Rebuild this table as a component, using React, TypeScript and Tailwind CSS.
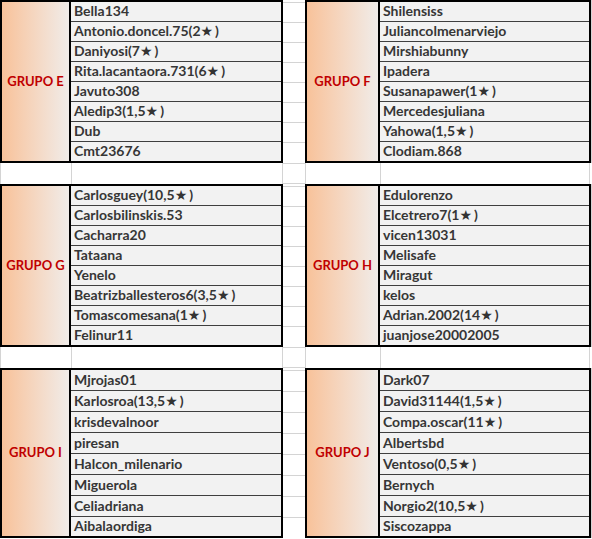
import React from "react";

type Group = { label: string; names: string[] };

const bands: { left: Group; right: Group; rows: string[] }[] = [
  {
    rows: ["h-[20px]", "h-[20px]", "h-[20px]", "h-[20px]", "h-[20px]", "h-[20px]", "h-[20px]", "h-[19px]"],
    left: {
      label: "GRUPO E",
      names: ["Bella134", "Antonio.doncel.75(2★)", "Daniyosi(7★)", "Rita.lacantaora.731(6★)", "Javuto308", "Aledip3(1,5★)", "Dub", "Cmt23676"],
    },
    right: {
      label: "GRUPO F",
      names: ["Shilensiss", "Juliancolmenarviejo", "Mirshiabunny", "Ipadera", "Susanapawer(1★)", "Mercedesjuliana", "Yahowa(1,5★)", "Clodiam.868"],
    },
  },
  {
    rows: ["h-[20px]", "h-[20px]", "h-[20px]", "h-[20px]", "h-[20px]", "h-[20px]", "h-[20px]", "h-[19px]"],
    left: {
      label: "GRUPO G",
      names: ["Carlosguey(10,5★)", "Carlosbilinskis.53", "Cacharra20", "Tataana", "Yenelo", "Beatrizballesteros6(3,5★)", "Tomascomesana(1★)", "Felinur11"],
    },
    right: {
      label: "GRUPO H",
      names: ["Edulorenzo", "Elcetrero7(1★)", "vicen13031", "Melisafe", "Miragut", "kelos", "Adrian.2002(14★)", "juanjose20002005"],
    },
  },
  {
    rows: ["h-[21px]", "h-[21px]", "h-[21px]", "h-[21px]", "h-[21px]", "h-[21px]", "h-[21px]", "h-[19px]"],
    left: {
      label: "GRUPO I",
      names: ["Mjrojas01", "Karlosroa(13,5★)", "krisdevalnoor", "piresan", "Halcon_milenario", "Miguerola", "Celiadriana", "Aibalaordiga"],
    },
    right: {
      label: "GRUPO J",
      names: ["Dark07", "David31144(1,5★)", "Compa.oscar(11★)", "Albertsbd", "Ventoso(0,5★)", "Bernych", "Norgio2(10,5★)", "Siscozappa"],
    },
  },
];

function Name({ text }: { text: string }) {
  const i = text.indexOf("★");
  if (i < 0) return <>{text}</>;
  return (
    <>
      {text.slice(0, i)}
      <span className="font-['DejaVu_Sans'] text-[14px] text-[#333333] mr-[2px]">★</span>
      {text.slice(i + 1)}
    </>
  );
}

function Table({ group, width, labelW, rows }: { group: Group; width: string; labelW: string; rows: string[] }) {
  return (
    <div className={`${width} flex border-2 border-black`}>
      <div
        className={`${labelW} shrink-0 flex items-center justify-center border-r-2 border-black bg-gradient-to-r from-[#f8c29a] to-[#f0ece9] text-[13px] font-bold text-[#c00000]`}
      >
        {group.label}
      </div>
      <div className="flex flex-1 flex-col">
        {group.names.map((n, idx) => (
          <div
            key={idx}
            className={`${rows[idx]} flex items-end bg-[#f2f2f2] pl-[3px] pb-px text-[14px] font-bold leading-[18px] text-[#363636] ${
              idx < group.names.length - 1 ? "border-b border-[#3f3f3f]" : ""
            }`}
          >
            <span className="whitespace-nowrap">
              <Name text={n} />
            </span>
          </div>
        ))}
      </div>
    </div>
  );
}

function Spacer({ rows }: { rows: string[] }) {
  return (
    <div className="w-[22px] shrink-0 flex flex-col pt-[2px]">
      {rows.map((h, i) => (
        <div key={i} className={`${h} border-t border-[#d4d4d4]`} />
      ))}
    </div>
  );
}

function Gap() {
  return (
    <div className="flex h-[21px]">
      <div className="w-[72px] border-x border-[#d4d4d4]" />
      <div className="w-[211px] border-r border-[#d4d4d4]" />
      <div className="w-[23px] border-r border-b border-t border-[#d4d4d4]" />
      <div className="w-[75px] border-r border-[#d4d4d4]" />
      <div className="w-[209px] border-r border-[#d4d4d4]" />
    </div>
  );
}

export default function App() {
  return (
    <div className="h-[539px] w-[592px] overflow-hidden bg-white font-['Lato',sans-serif]">
      {bands.map((b, i) => (
        <React.Fragment key={i}>
          {i > 0 && <Gap />}
          <div className="flex">
            <Table group={b.left} width="w-[283px]" labelW="w-[69px]" rows={b.rows} />
            <Spacer rows={b.rows} />
            <Table group={b.right} width="w-[286px]" labelW="w-[73px]" rows={b.rows} />
            <div className="w-px border-l border-[#d4d4d4]" />
          </div>
        </React.Fragment>
      ))}
    </div>
  );
}
